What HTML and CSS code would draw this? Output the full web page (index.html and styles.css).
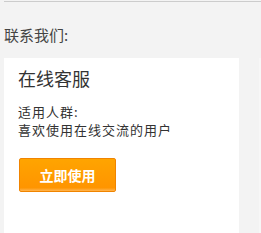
FILE: index.html
```html
<!DOCTYPE html>
<html lang="zh-CN">
<head>
  <meta charset="UTF-8">
  <title>联系我们</title>
  <link rel="stylesheet" href="styles.css">
</head>
<body>
  <main class="contact">
    <h2 class="contact-title">联系我们:</h2>
    <div class="cards">
      <div class="card">
        <h3 class="card-title">在线客服</h3>
        <p class="card-desc">适用人群:<br>喜欢使用在线交流的用户</p>
        <button class="btn">立即使用</button>
      </div>
      <div class="card card-next"></div>
    </div>
  </main>
</body>
</html>
```

FILE: styles.css
```css
* {
  box-sizing: border-box;
}

body {
  margin: 0;
  background: #f3f3f3;
  font-family: "Noto Sans CJK SC", "Microsoft YaHei", sans-serif;
  color: #333;
}

.contact {
  margin: 1px 0 0 4px;
  border-top: 1px solid #cccccc;
}

.contact-title {
  margin: 0;
  padding-top: 22px;
  font-size: 15px;
  font-weight: normal;
  line-height: 22px;
  color: #444;
}

.cards {
  display: flex;
  gap: 20px;
  margin-top: 12px;
  height: 175px;
  overflow: hidden;
}

.card {
  flex: 0 0 235px;
  background: #fff;
  padding: 8px 14px;
}

.card-next {
  flex-basis: 2px;
  background: #f7f7f7;
}

.card-title {
  margin: 0;
  font-size: 18px;
  font-weight: normal;
  line-height: 24px;
  color: #333;
}

.card-desc {
  margin: 13px 0 0;
  font-size: 13px;
  letter-spacing: 1px;
  line-height: 18px;
  color: #333;
}

.btn {
  display: block;
  margin: 19px 0 0 1px;
  width: 97px;
  height: 34px;
  border: 1px solid #f08400;
  border-radius: 2px;
  background: linear-gradient(#ffa400, #ff9500 90%, #ffb450);
  color: #fff;
  font-family: inherit;
  font-size: 14px;
  font-weight: bold;
}
```
